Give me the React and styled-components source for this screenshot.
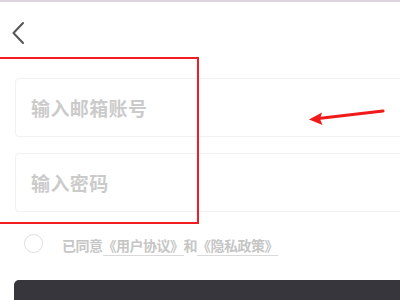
import styled, { createGlobalStyle } from "styled-components";

const GlobalStyle = createGlobalStyle`
  html, body {
    margin: 0;
    padding: 0;
    background: #ffffff;
    overflow: hidden;
  }
  body {
    font-family: "Noto Sans CJK SC", "Noto Sans", sans-serif;
  }
`

const Page = styled.div`
  position: relative;
  width: 400px;
  height: 300px;
  overflow: hidden;
  background: #ffffff;
  border-top: 2px solid #dcd4de;
  box-sizing: border-box;
`

const TopBar = styled.div`
  height: 55px;
  display: flex;
  align-items: flex-start;
  padding: 19px 0 0 9px;
  box-sizing: border-box;
`

const BackButton = styled.div`
  width: 18px;
  height: 24px;
  display: flex;
  align-items: center;
  justify-content: center;
`

const Form = styled.div`
  width: 430px;
  padding: 21px 0 0 15px;
  display: flex;
  flex-direction: column;
  gap: 16px;
`

const Field = styled.div`
  height: 59px;
  border: 1px solid #f1f1f1;
  border-radius: 4px;
  display: flex;
  align-items: center;
  padding-left: 15px;
  box-sizing: border-box;
`

const Placeholder = styled.span`
  font-size: 19px;
  font-weight: 700;
  color: #cbcbcb;
  letter-spacing: 0.4px;
`

const AgreeRow = styled.div`
  display: flex;
  align-items: center;
  gap: 19px;
  padding: 22px 0 0 24px;
  height: 19px;
`

const Circle = styled.div`
  width: 17px;
  height: 17px;
  border: 1px solid #dedede;
  border-radius: 50%;
`

const AgreeText = styled.span`
  font-size: 14px;
  font-weight: 700;
  color: #c6c6c6;
  letter-spacing: -0.5px;
  padding-top: 2px;
`

const Link = styled.span`
  border-bottom: 1px solid #dadada;
  padding-bottom: 0;
`

const SubmitButton = styled.div`
  margin: 27px 0 0 14px;
  width: 420px;
  height: 48px;
  background: #36363c;
  border-radius: 5px;
`

const Highlight = styled.div`
  position: absolute;
  left: -4px;
  top: 55px;
  width: 199px;
  height: 163px;
  border: 2px solid #f21c23;
  pointer-events: none;
`

const Arrow = styled.svg`
  position: absolute;
  left: 300px;
  top: 100px;
`

function App() {
  return (
    <Page>
      <GlobalStyle />
      <TopBar>
        <BackButton>
          <svg width="14" height="24" viewBox="0 0 14 24">
            <path d="M12 2 L2.5 12 L12 22" fill="none" stroke="#555" strokeWidth="2" strokeLinecap="round" strokeLinejoin="round" />
          </svg>
        </BackButton>
      </TopBar>
      <Form>
        <Field>
          <Placeholder>输入邮箱账号</Placeholder>
        </Field>
        <Field>
          <Placeholder>输入密码</Placeholder>
        </Field>
      </Form>
      <AgreeRow>
        <Circle />
        <AgreeText>
          已同意<Link>《用户协议》</Link>和<Link>《隐私政策》</Link>
        </AgreeText>
      </AgreeRow>
      <SubmitButton />
      <Highlight />
      <Arrow width="90" height="30" viewBox="0 0 90 30">
        <path d="M83 9 L14 17" fill="none" stroke="#f01a1a" strokeWidth="3.2" strokeLinecap="round" />
        <path d="M9 17.5 L22 10.5 L20 17 L22.5 23 Z" fill="#f01a1a" />
      </Arrow>
    </Page>
  )
}

export default App
